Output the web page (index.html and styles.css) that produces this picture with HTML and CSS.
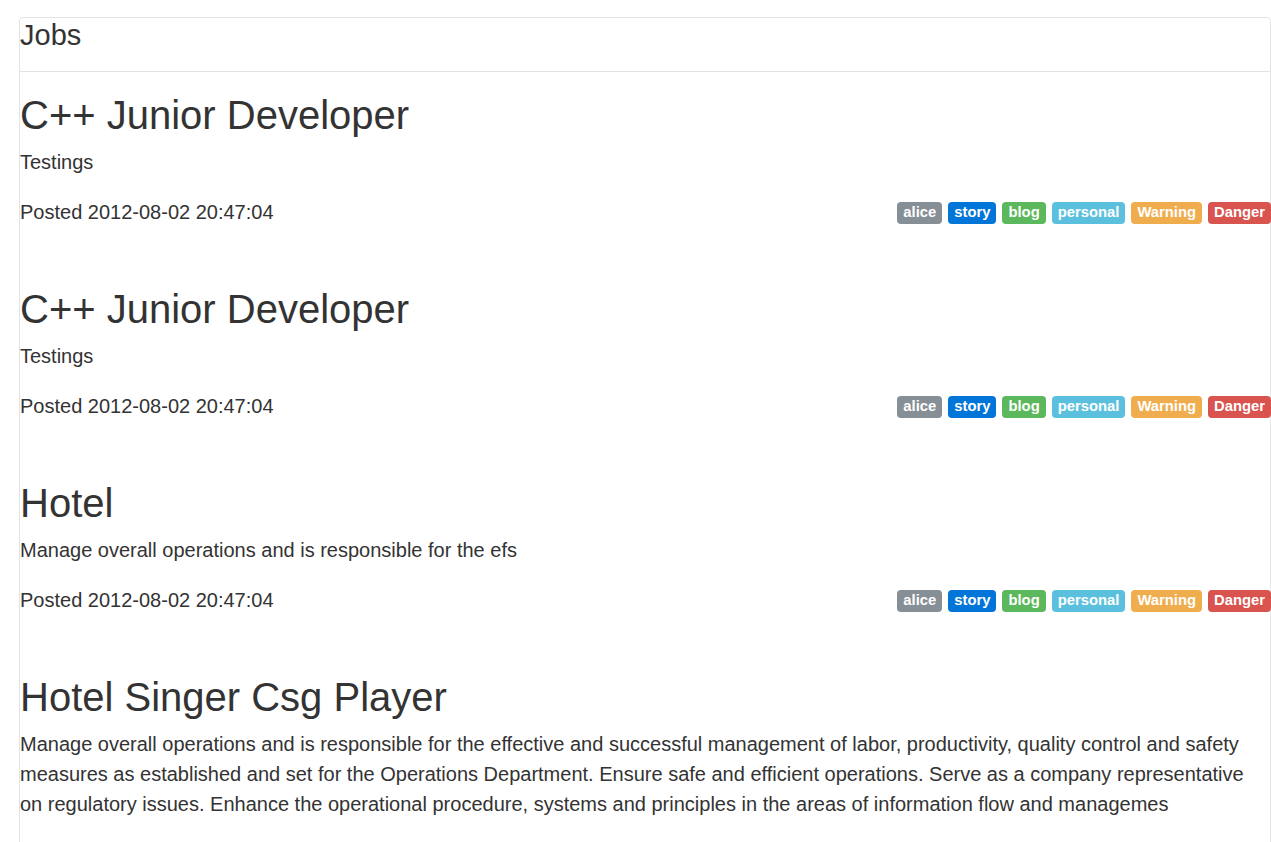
FILE: index.html
```html
<!DOCTYPE html>
<html lang="en">
<head>
<meta charset="utf-8">
<title>Jobs</title>
<link rel="stylesheet" href="styles.css">
</head>
<body>
<div class="page">
  <div class="card">
    <div class="card-header"><h3 class="card-title">Jobs</h3></div>
    <div class="job">
      <h1 class="job-title">C++ Junior Developer</h1>
      <p class="job-desc">Testings</p>
      <div class="job-meta">
        <span class="posted">Posted 2012-08-02 20:47:04</span>
        <div class="tags">
          <span class="badge badge-alice">alice</span>
          <span class="badge badge-story">story</span>
          <span class="badge badge-blog">blog</span>
          <span class="badge badge-personal">personal</span>
          <span class="badge badge-warning">Warning</span>
          <span class="badge badge-danger">Danger</span>
        </div>
      </div>
    </div>
    <div class="job">
      <h1 class="job-title">C++ Junior Developer</h1>
      <p class="job-desc">Testings</p>
      <div class="job-meta">
        <span class="posted">Posted 2012-08-02 20:47:04</span>
        <div class="tags">
          <span class="badge badge-alice">alice</span>
          <span class="badge badge-story">story</span>
          <span class="badge badge-blog">blog</span>
          <span class="badge badge-personal">personal</span>
          <span class="badge badge-warning">Warning</span>
          <span class="badge badge-danger">Danger</span>
        </div>
      </div>
    </div>
    <div class="job">
      <h1 class="job-title">Hotel</h1>
      <p class="job-desc">Manage overall operations and is responsible for the efs</p>
      <div class="job-meta">
        <span class="posted">Posted 2012-08-02 20:47:04</span>
        <div class="tags">
          <span class="badge badge-alice">alice</span>
          <span class="badge badge-story">story</span>
          <span class="badge badge-blog">blog</span>
          <span class="badge badge-personal">personal</span>
          <span class="badge badge-warning">Warning</span>
          <span class="badge badge-danger">Danger</span>
        </div>
      </div>
    </div>
    <div class="job">
      <h1 class="job-title">Hotel Singer Csg Player</h1>
      <p class="job-desc">Manage overall operations and is responsible for the effective and successful management of labor, productivity, quality control and safety measures as established and set for the Operations Department. Ensure safe and efficient operations. Serve as a company representative on regulatory issues. Enhance the operational procedure, systems and principles in the areas of information flow and managemes</p>
    </div>
  </div>
</div>
</body>
</html>
```

FILE: styles.css
```css
html, body {
  margin: 0;
  padding: 0;
  overflow: hidden;
}

body {
  font-family: "Liberation Sans", Arial, sans-serif;
  font-size: 20px;
  line-height: 1.5;
  color: #333333;
  background: #ffffff;
}

.page {
  padding: 17px 0 0 19px;
  height: 825px;
}

.card {
  box-sizing: border-box;
  width: 1252px;
  height: 840px;
  border: 1px solid #e3e3e3;
  border-radius: 4px;
  background: #ffffff;
}

.card-header {
  padding: 0 0 18px;
  border-bottom: 1px solid #e3e3e3;
}

.card-title {
  margin: 0;
  font-size: 29px;
  font-weight: 400;
  line-height: 1.2;
}

.job {
  padding: 19px 0 39px;
}

.job:last-child {
  padding-bottom: 0;
}

.job-title {
  margin: 0 0 8px;
  font-size: 40px;
  font-weight: 400;
  line-height: 1.2;
}

.job-desc {
  margin: 0 0 20px;
}

.job-meta {
  display: flex;
  justify-content: space-between;
  align-items: center;
  height: 30px;
}

.tags {
  display: flex;
  gap: 6px;
  align-items: center;
  margin-top: 2px;
  margin-right: -1px;
}

.badge {
  display: inline-block;
  padding: 3px 6px 4px;
  font-size: 14.8px;
  font-weight: 700;
  line-height: 15px;
  color: #ffffff;
  border-radius: 4px;
  white-space: nowrap;
}

.badge-alice { background: #868e96; }
.badge-story { background: #0275d8; }
.badge-blog { background: #5cb85c; }
.badge-personal { background: #5bc0de; }
.badge-warning { background: #f0ad4e; }
.badge-danger { background: #d9534f; }
```
